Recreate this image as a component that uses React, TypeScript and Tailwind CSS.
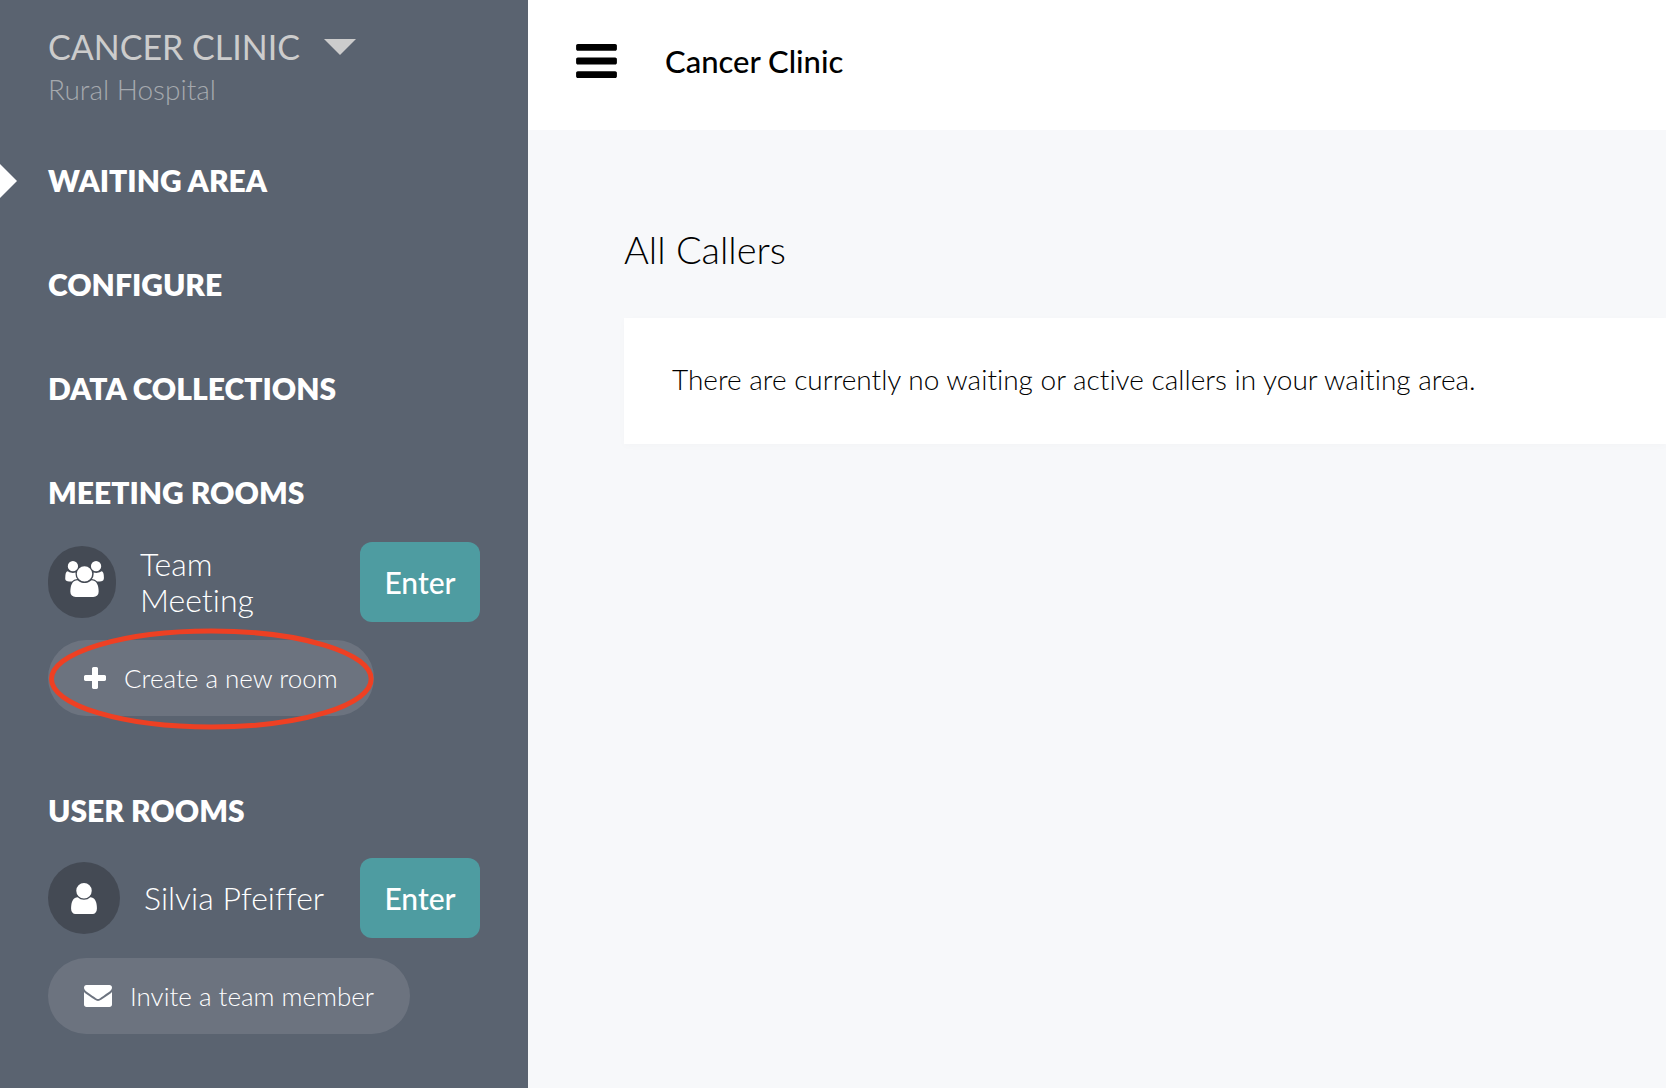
import type { ReactNode } from 'react';

type IconProps = { className?: string };

function BarsIcon({ className }: IconProps) {
  return (
    <svg className={className} viewBox="128 256 1536 1280" fill="currentColor" aria-hidden="true">
      <path d="M1664 1344v128q0 26-19 45t-45 19h-1408q-26 0-45-19t-19-45v-128q0-26 19-45t45-19h1408q26 0 45 19t19 45zm0-512v128q0 26-19 45t-45 19h-1408q-26 0-45-19t-19-45v-128q0-26 19-45t45-19h1408q26 0 45 19t19 45zm0-512v128q0 26-19 45t-45 19h-1408q-26 0-45-19t-19-45v-128q0-26 19-45t45-19h1408q26 0 45 19t19 45z" />
    </svg>
  );
}

function PlusIcon({ className }: IconProps) {
  return (
    <svg className={className} viewBox="192 128 1408 1408" fill="currentColor" aria-hidden="true">
      <path d="M1600 736v192q0 40-28 68t-68 28h-416v416q0 40-28 68t-68 28h-192q-40 0-68-28t-28-68v-416h-416q-40 0-68-28t-28-68v-192q0-40 28-68t68-28h416v-416q0-40 28-68t68-28h192q40 0 68 28t28 68v416h416q40 0 68 28t28 68z" />
    </svg>
  );
}

function UserIcon({ className }: IconProps) {
  return (
    <svg className={className} viewBox="256 128 1280 1536" fill="currentColor" aria-hidden="true">
      <path d="M1536 1399q0 109-62.5 187t-150.5 78h-854q-88 0-150.5-78t-62.5-187q0-85 8.5-160.5t31.5-152 58.5-131 94-89 134.5-34.5q131 128 313 128t313-128q76 0 134.5 34.5t94 89 58.5 131 31.5 152 8.5 160.5zm-256-887q0 159-112.5 271.5t-271.5 112.5-271.5-112.5-112.5-271.5 112.5-271.5 271.5-112.5 271.5 112.5 112.5 271.5z" />
    </svg>
  );
}

function UsersIcon({ className }: IconProps) {
  return (
    <svg className={className} viewBox="64 0 1920 1792" fill="currentColor" aria-hidden="true">
      <path d="M657 896q-162 5-265 128h-134q-82 0-138-40.5t-56-118.5q0-353 124-353 6 0 43.5 21t97.5 42.5 119 21.5q67 0 133-23-5 37-5 66 0 159 90 256zm1071 637q0 120-73 189.5t-194 69.5h-874q-121 0-194-69.5t-73-189.5q0-53 3.5-103.5t14-109 26.5-108.5 43-97.5 62-81 85.5-53.5 111.5-20q10 0 43 21.5t73 48 107 48 135 21.5 135-21.5 107-48 73-48 43-21.5q61 0 111.5 20t85.5 53.5 62 81 43 97.5 26.5 108.5 14 109 3.5 103.5zm-1024-1277q0 106-75 181t-181 75-181-75-75-181 75-181 181-75 181 75 75 181zm704 384q0 159-112.5 271.5t-271.5 112.5-271.5-112.5-112.5-271.5 112.5-271.5 271.5-112.5 271.5 112.5 112.5 271.5zm576 225q0 78-56 118.5t-138 40.5h-134q-103-123-265-128 90-97 90-256 0-29-5-66 66 23 133 23 59 0 119-21.5t97.5-42.5 43.5-21q124 0 124 353zm-128-609q0 106-75 181t-181 75-181-75-75-181 75-181 181-75 181 75 75 181z" />
    </svg>
  );
}

function EnvelopeIcon({ className }: IconProps) {
  return (
    <svg className={className} viewBox="0 256 1792 1408" fill="currentColor" aria-hidden="true">
      <path d="M1792 710v794q0 66-47 113t-113 47h-1472q-66 0-113-47t-47-113v-794q44 49 101 87 362 246 497 345 57 42 92.5 65.5t94.5 48 110 24.5h2q51 0 110-24.5t94.5-48 92.5-65.5q170-123 498-345 57-39 100-87zm0-294q0 79-49 151t-122 123q-376 261-468 325-10 7-42.5 31t-54 38.5-52 32.5-57.5 27-50 9h-2q-23 0-50-9t-57.5-27-52-32.5-54-38.5-42.5-31q-91-64-262-182.5t-205-142.5q-62-42-117-115.5t-55-136.5q0-78 41.5-130t118.5-52h1472q65 0 112.5 47t47.5 113z" />
    </svg>
  );
}

function Room({ name, avatar }: { name: string; avatar: ReactNode }) {
  return (
    <div className="flex items-center">
      {avatar}
      <span className="mr-7 ml-6 flex-1 text-[32px] leading-9 font-light">{name}</span>
      <button className="h-20 w-[120px] shrink-0 rounded-xl bg-[#4e9ca1] text-[30px] font-medium">Enter</button>
    </div>
  );
}

function PillButton({ label, icon, children }: { label: string; icon: ReactNode; children?: ReactNode }) {
  return (
    <button className="relative flex h-[76px] w-fit items-center rounded-full bg-[#6c737f] px-9 text-[26px] font-light whitespace-nowrap">
      {icon}
      <span className="ml-[18px]">{label}</span>
      {children}
    </button>
  );
}

const navLinks = [
  { label: 'WAITING AREA', active: true },
  { label: 'CONFIGURE', active: false },
  { label: 'DATA COLLECTIONS', active: false },
];

export default function App() {
  return (
    <div className="flex min-h-screen bg-[#f7f8fa] font-['Lato',sans-serif] text-black [font-variant-ligatures:none]">
      <aside className="w-[528px] shrink-0 bg-[#5a6370] px-12 pt-[27px] pb-12 text-white">
        <button className="flex items-center text-[34px] leading-10 text-[#cccccc]">
          CANCER CLINIC
          <svg className="ml-6 h-4 w-8" viewBox="0 0 32 16" fill="currentColor" aria-hidden="true">
            <path d="M0 0h32L16 16z" />
          </svg>
        </button>
        <p className="mt-0.5 text-[28px] leading-10 font-light text-[#a5a9ae]">Rural Hospital</p>

        <nav className="mt-[51px] flex flex-col gap-16 text-[30px] leading-10 font-extrabold">
          {navLinks.map((link) => (
            <a key={link.label} href="#" className="relative">
              {/* Marker for the current page */}
              {link.active && (
                <svg className="absolute top-1 -left-12 h-[34px] w-[17px]" viewBox="0 0 17 34" fill="currentColor" aria-hidden="true">
                  <path d="M0 0l17 17L0 34z" />
                </svg>
              )}
              {link.label}
            </a>
          ))}
        </nav>

        <section className="mt-16">
          <h2 className="mb-[30px] text-[30px] leading-10 font-extrabold">MEETING ROOMS</h2>
          <Room
            name="Team Meeting"
            avatar={
              <span className="flex h-[72px] w-[68px] shrink-0 items-center justify-center rounded-[36px] bg-[#444a54] pb-1.5 pl-1">
                <UsersIcon className="h-9 w-[39px]" />
              </span>
            }
          />
          <div className="mt-[18px]">
            <PillButton label="Create a new room" icon={<PlusIcon className="size-[22px]" />}>
              <svg className="absolute -top-3 left-0 h-[102px] w-full" viewBox="0 0 328 102" preserveAspectRatio="none" fill="none" aria-hidden="true">
                <ellipse cx="164.5" cy="51" rx="161" ry="48" stroke="#ee4023" strokeWidth="5" />
              </svg>
            </PillButton>
          </div>
        </section>

        <section className="mt-[74px]">
          <h2 className="mb-7 text-[30px] leading-10 font-extrabold">USER ROOMS</h2>
          <Room
            name="Silvia Pfeiffer"
            avatar={
              <span className="flex size-[72px] shrink-0 items-center justify-center rounded-[36px] bg-[#444a54]">
                <UserIcon className="h-[31px] w-[26px]" />
              </span>
            }
          />
          <div className="mt-5">
            <PillButton label="Invite a team member" icon={<EnvelopeIcon className="h-[22px] w-7" />} />
          </div>
        </section>
      </aside>

      <div className="min-w-0 flex-1">
        <header className="flex h-[130px] items-center bg-white px-12 pb-2">
          <button aria-label="Toggle menu">
            <BarsIcon className="h-[34px] w-[41px]" />
          </button>
          <h1 className="ml-12 text-[31px] font-medium">Cancer Clinic</h1>
        </header>
        <main className="pt-[95px] pl-24">
          <h2 className="text-[38px] leading-[48px] font-light">All Callers</h2>
          <div className="mt-[45px] bg-white px-12 pt-[38px] pb-[42px] shadow-[0_2px_8px_rgba(0,0,0,0.02)]">
            <p className="text-[28px] leading-[46px] font-light">There are currently no waiting or active callers in your waiting area.</p>
          </div>
        </main>
      </div>
    </div>
  );
}
